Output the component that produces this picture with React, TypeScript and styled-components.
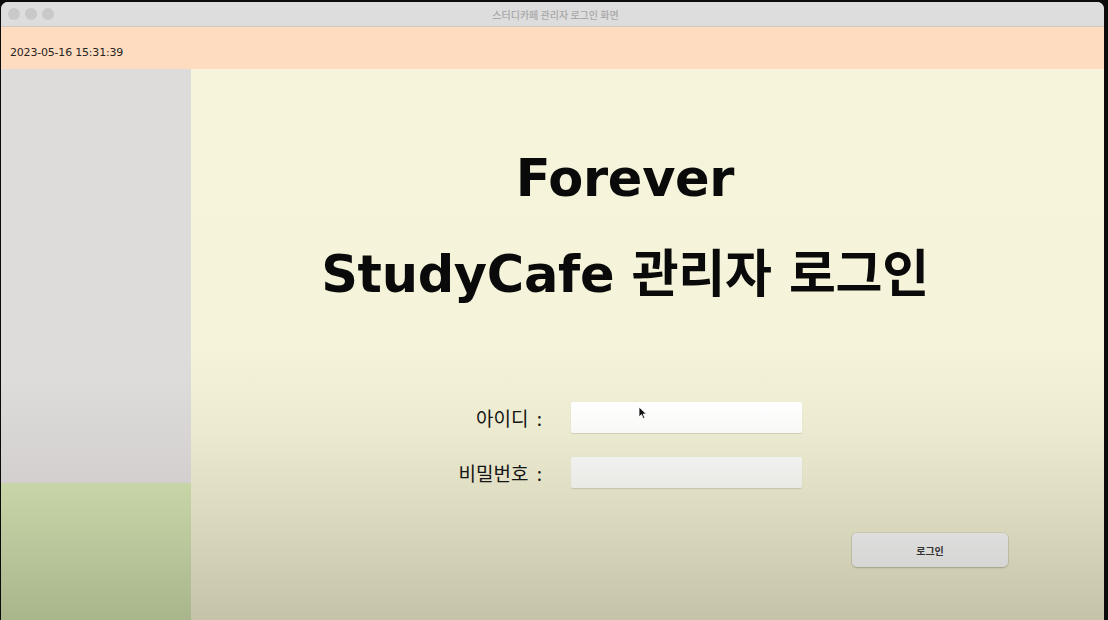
import * as React from 'react';
import styled, { createGlobalStyle } from 'styled-components';

const GlobalStyle = createGlobalStyle`
  html, body {
    margin: 0;
    padding: 0;
    background: #0b0b0b;
    overflow: hidden;
  }
  body {
    font-family: "DejaVu Sans", "Noto Sans CJK KR", sans-serif;
  }
`;

const Window = styled.div`
  margin: 2px 0 0 1px;
  width: 1103px;
  height: 630px;
  border-radius: 7px 7px 0 0;
  overflow: hidden;
  display: flex;
  flex-direction: column;
  background: #f6f5dc;
`;

const TitleBar = styled.div`
  position: relative;
  height: 24px;
  flex: none;
  display: flex;
  align-items: center;
  justify-content: center;
  background: #dddddd;
  border-bottom: 1px solid #d2c8bf;
`;

const Lights = styled.div`
  position: absolute;
  left: 7px;
  top: 6px;
  display: flex;
  gap: 5px;
`;

const Light = styled.span`
  width: 12px;
  height: 12px;
  border-radius: 50%;
  background: #c9c9c9;
`;

const TitleText = styled.span`
  font-family: "Noto Sans CJK KR", sans-serif;
  font-size: 10px;
  font-weight: 500;
  color: #a8a8a8;
  margin-left: 6px;
`;

const Header = styled.div`
  height: 42px;
  flex: none;
  display: flex;
  align-items: flex-end;
  padding: 0 0 10px 9px;
  box-sizing: border-box;
  background: #fddcc0;
`;

const Clock = styled.span`
  font-family: "DejaVu Sans", sans-serif;
  font-size: 11px;
  color: #2a2420;
  letter-spacing: -0.2px;
`;

const Body = styled.div`
  flex: 1;
  display: flex;
`;

const Sidebar = styled.div`
  width: 190px;
  flex: none;
  display: flex;
  flex-direction: column;
`;

const SideTop = styled.div`
  height: 414px;
  background: linear-gradient(180deg, #dedbdb 0%, #dedbdb 75%, #d3cfcf 100%);
`;

const SideBottom = styled.div`
  flex: 1;
  background: linear-gradient(180deg, #c7d5a7 0%, #b9c69b 45%, #a6b389 100%);
`;

const Main = styled.div`
  position: relative;
  flex: 1;
  display: flex;
  flex-direction: column;
  background: linear-gradient(180deg, #f6f5dc 0%, #f5f4da 50%, #ebe9cf 65%, #d8d6bb 82%, #c3c1a5 100%);
`;

const Titles = styled.div`
  display: flex;
  flex-direction: column;
  align-items: center;
  padding: 80px 45px 0 0;
  gap: 36px;
`;

const Title = styled.h1`
  margin: 0;
  font-family: "DejaVu Sans", "Noto Sans CJK KR", sans-serif;
  font-size: 51px;
  font-weight: 700;
  line-height: 60px;
  color: #0a0a0a;
  letter-spacing: -0.3px;
`;

const Form = styled.div`
  display: grid;
  grid-template-columns: 114px 231px;
  column-gap: 26px;
  row-gap: 24px;
  margin: 97px 0 0 240px;
`;

const Label = styled.label`
  font-family: "Noto Sans CJK KR", sans-serif;
  font-size: 19px;
  font-weight: 400;
  line-height: 31px;
  color: #151515;
  text-align: right;
  word-spacing: 4px;
  padding-right: 3px;
`;

const Field = styled.div<{ $tone: 'white' | 'gray' }>`
  height: 31px;
  border-radius: 2px;
  background: ${p => (p.$tone === 'white'
    ? 'linear-gradient(180deg, #ffffff, #f8f8f6)'
    : 'linear-gradient(180deg, #f1f1ef, #e9e9e6)')};
  box-shadow: 0 1px 1px rgba(0, 0, 0, 0.12);
`;

const Actions = styled.div`
  display: flex;
  justify-content: flex-end;
  padding: 45px 96px 0 0;
`;

const Button = styled.button`
  width: 156px;
  height: 34px;
  border: none;
  border-radius: 5px;
  background: linear-gradient(180deg, #dedede, #d6d6d4);
  box-shadow: 0 0 0 1px rgba(0, 0, 0, 0.06), 0 1px 2px rgba(0, 0, 0, 0.18);
  font-family: "Noto Sans CJK KR", sans-serif;
  font-size: 10px;
  font-weight: 700;
  color: #333;
`;

const Cursor = styled.svg`
  position: absolute;
  left: 447px;
  top: 337px;
`;

const App: React.FC = () => (
  <>
    <GlobalStyle />
    <Window>
      <TitleBar>
        <Lights>
          <Light />
          <Light />
          <Light />
        </Lights>
        <TitleText>스터디카페 관리자 로그인 화면</TitleText>
      </TitleBar>
      <Header>
        <Clock>2023-05-16 15:31:39</Clock>
      </Header>
      <Body>
        <Sidebar>
          <SideTop />
          <SideBottom />
        </Sidebar>
        <Main>
          <Titles>
            <Title>Forever</Title>
            <Title>StudyCafe 관리자 로그인</Title>
          </Titles>
          <Form>
            <Label>아이디 :</Label>
            <Field $tone="white" />
            <Label>비밀번호 :</Label>
            <Field $tone="gray" />
          </Form>
          <Actions>
            <Button>로그인</Button>
          </Actions>
          <Cursor width="9" height="14" viewBox="0 0 9 14">
            <path d="M1 1 L1 11 L3.5 8.6 L5.2 12.6 L6.8 12 L5.2 8 L8.4 8 Z" fill="#111" stroke="#fff" strokeWidth="0.8" />
          </Cursor>
        </Main>
      </Body>
    </Window>
  </>
);

export default App;
